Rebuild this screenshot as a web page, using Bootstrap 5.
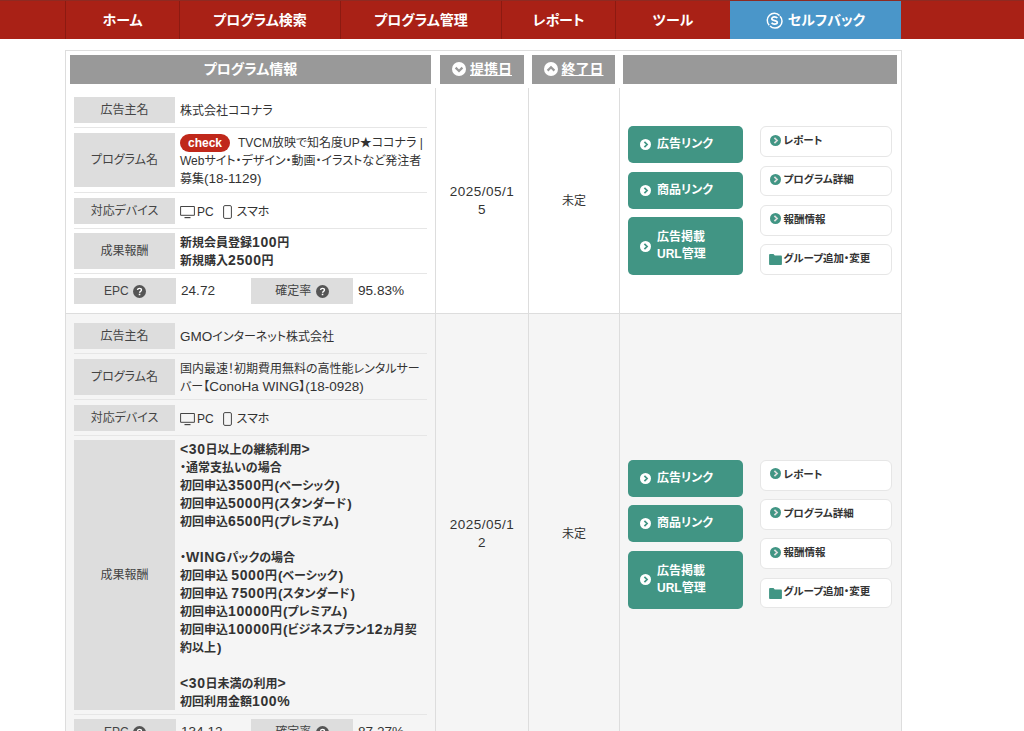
<!DOCTYPE html>
<html lang="ja">
<head>
<meta charset="utf-8">
<title>プログラム情報</title>
<link href="https://cdn.jsdelivr.net/npm/bootstrap@5.3.0/dist/css/bootstrap.min.css" rel="stylesheet">
<style>
html,body{height:731px;overflow:hidden;}
body{font-family:"Liberation Sans","Noto Sans CJK JP",sans-serif;font-size:12px;line-height:18px;color:#333;font-feature-settings:"palt";background:#fff;}
.topbar{height:39px;background:#a92116;border-top:1px solid #8e2a22;padding-left:65px;}
.topbar .nav-link{height:38px;color:#fff;font-weight:700;font-size:14px;line-height:38px;padding:0;text-align:center;border-left:1px solid #8c1a11;}
.tb-s{width:114px}.tb-t{width:115px}.tb-m{width:161px}.tb-b{width:171px;background:#4a96c9;border-left:0!important;}
.tb-b svg{width:17px;height:17px;vertical-align:-4px;margin-right:5px;}
.sheet{width:837px;margin:11px 0 0 65px;border:1px solid #ddd;border-bottom:0;}
.headrow{padding:4px;gap:8px;}
.headcell{height:29px;background:#999;color:#fff;font-weight:700;font-size:14px;line-height:29px;text-align:center;}
.headcell a{color:#fff;}
.headcell svg{width:14px;height:14px;vertical-align:-2px;margin-right:4px;}
.hc1{width:361px;margin-right:1px}.hc2{width:84px}.hc3{width:83px}.hc4{flex:1}
.rowgrid{display:grid;grid-template-columns:370px 93px 91px 1fr;border-bottom:1px solid #ddd;}
.rowgrid.shade{background:#f5f5f5;}
.infocol{padding:4px 8px 0;border-right:1px solid #ddd;}
.infoline{display:flex;padding:5px 0 4px;border-bottom:1px solid #e6e6e6;}
.infoline.threeline{padding-bottom:5px;}
.infoline.reward{padding:4px 0;}
.infoline.endline{border-bottom:0;padding:4px 0 9px;}
.lbl{width:101px;flex:none;background:#ddd;display:flex;align-items:center;justify-content:center;min-height:26px;color:#444;}
.val{padding:5px 4px 3px 5px;flex:1;min-width:0;}
.val.tight{padding:0 4px 0 5px;margin:1px 0 -1px;}
.lt{font-size:13.5px;line-height:1;}
.fw-bold .lt{font-size:14px;letter-spacing:.6px;}
.pa{font-size:13.5px;line-height:1;margin-left:1px;}
.lbl2{width:102px}
.num{font-size:13.6px;padding:4px 0 0 5px;width:75px;flex:none;line-height:18px;}
.num2{width:auto}
.qm{width:13px;height:13px;vertical-align:-2px;margin-left:1px;}
.devsvg{height:14px;vertical-align:-3px;margin-right:2px;}
.phone{margin-left:9px;margin-right:5px;}
.chip{background:#c0281b;font-size:12px;font-weight:700;padding:0;width:50px;height:18px;line-height:18px;margin-right:8px;}
.datecol{display:flex;align-items:center;justify-content:center;text-align:center;border-right:1px solid #ddd;padding:0 13px;font-size:13.5px;line-height:18px;word-break:break-all;letter-spacing:.5px;}
.endcol{display:flex;align-items:center;justify-content:center;border-right:1px solid #ddd;}
.actcol{display:flex;align-items:center;padding-left:8px;gap:17px;}
.btnstack1{width:115px;gap:8.5px;}
.btnstack2{width:132px;gap:8.5px;}
.gbtn{background:#419584;border:0;border-radius:5px;color:#fff;font-weight:700;font-size:12px;line-height:17px;min-height:37px;padding:0 0 0 12px;display:flex;align-items:center;text-align:left;gap:6px;}
.gbtn:hover{background:#419584;color:#fff;}
.gbtn svg{width:11px;height:11px;flex:none;}
.gbtn.tall{min-height:58px;}
.wbtn{background:#fff;border:1.5px solid #e6e6e6;border-radius:6px;color:#333;font-weight:700;font-size:10.5px;line-height:14px;height:30.75px;padding:0 0 3px 8.5px;display:flex;align-items:center;gap:3px;text-align:left;}
.wbtn:hover{background:#fff;color:#333;border-color:#e6e6e6;}
.wbtn svg{width:11px;height:11px;flex:none;}
.wbtn svg.foldic{width:13px;margin-left:-1px;margin-right:-1px;margin-top:4px;}
</style>
</head>
<body>
<svg width="0" height="0" class="d-block" aria-hidden="true">
<symbol id="cd" viewBox="0 0 14 14"><circle cx="7" cy="7" r="7" fill="#fff"/><path d="M3.6 5.6 7 9l3.4-3.4" fill="none" stroke="#999" stroke-width="2.2"/></symbol>
<symbol id="cu" viewBox="0 0 14 14"><circle cx="7" cy="7" r="7" fill="#fff"/><path d="M3.6 8.6 7 5.2l3.4 3.4" fill="none" stroke="#999" stroke-width="2.2"/></symbol>
<symbol id="cw" viewBox="0 0 14 14"><circle cx="7" cy="7" r="7" fill="#fff"/><path d="M5.6 3.6 9 7l-3.4 3.4" fill="none" stroke="#419584" stroke-width="2.2"/></symbol>
<symbol id="cg" viewBox="0 0 14 14"><circle cx="7" cy="7" r="7" fill="#419584"/><path d="M5.6 3.6 9 7l-3.4 3.4" fill="none" stroke="#ddd" stroke-width="2.2"/></symbol>
<symbol id="fold" viewBox="0 0 14 12"><path d="M0 1.2C0 .5.5 0 1.2 0h3.6l1.4 1.6h6.6c.7 0 1.2.5 1.2 1.2v8c0 .7-.5 1.2-1.2 1.2H1.2C.5 12 0 11.5 0 10.8z" fill="#419584"/></symbol>
<symbol id="pc" viewBox="0 0 15 14"><path d="M.6 1.5h13.800v8.800H.6z" fill="none" stroke="#444" stroke-width="1"/><path d="M4.500 12.600h6" stroke="#444" stroke-width="1.200"/></symbol>
<symbol id="ph" viewBox="0 0 9 14"><rect x=".6" y=".6" width="7.800" height="12.800" rx="1.300" fill="none" stroke="#444" stroke-width="1"/></symbol>
<symbol id="qq" viewBox="0 0 14 14"><circle cx="7" cy="7" r="7" fill="#555"/><path d="M4.900 5.400C5 4.200 5.900 3.600 7 3.600c1.200 0 2.100.7 2.100 1.800 0 1.500-2 1.500-2 3" fill="none" stroke="#fff" stroke-width="1.500"/><path d="M6.200 9.400h1.700V11H6.200z" fill="#fff"/></symbol>
</svg>

<ul class="nav flex-nowrap topbar">
  <li class="nav-item"><a class="nav-link tb-s" href="#">ホーム</a></li>
  <li class="nav-item"><a class="nav-link tb-m" href="#">プログラム検索</a></li>
  <li class="nav-item"><a class="nav-link tb-m" href="#">プログラム管理</a></li>
  <li class="nav-item"><a class="nav-link tb-s" href="#">レポート</a></li>
  <li class="nav-item"><a class="nav-link tb-t" href="#">ツール</a></li>
  <li class="nav-item"><a class="nav-link tb-b" href="#"><svg viewBox="0 0 17 17"><path d="M3.200 13.200A7 7 0 0 1 13.500 3.500M14 4.200a7 7 0 0 1-10 9.800" fill="none" stroke="#fff" stroke-width="1.500"/><path d="M11.300 6.200C10.800 5.300 9.700 4.900 8.500 4.900c-1.500 0-2.700.7-2.700 1.900 0 2.600 5.500 1 5.500 3.500 0 1.200-1.300 1.900-2.800 1.900-1.200 0-2.300-.5-2.900-1.400" fill="none" stroke="#fff" stroke-width="1.700"/></svg>セルフバック</a></li>
</ul>

<div class="sheet">
  <div class="d-flex headrow">
    <div class="headcell hc1">プログラム情報</div>
    <div class="headcell hc2"><svg><use href="#cd"/></svg><a href="#">提携日</a></div>
    <div class="headcell hc3"><svg><use href="#cu"/></svg><a href="#">終了日</a></div>
    <div class="headcell hc4"></div>
  </div>

  <div class="rowgrid">
    <div class="infocol">
      <div class="infoline"><div class="lbl">広告主名</div><div class="val">株式会社ココナラ</div></div>
      <div class="infoline threeline"><div class="lbl">プログラム名</div><div class="val tight"><span class="badge rounded-pill chip">check</span>TVCM放映で知名度UP★ココナラ | Webサイト・デザイン・動画・イラストなど発注者募集<span class="lt">(18-1129)</span></div></div>
      <div class="infoline"><div class="lbl">対応デバイス</div><div class="val"><svg class="devsvg" width="15" viewBox="0 0 15 14"><use href="#pc"/></svg>PC<svg class="devsvg phone" width="9" viewBox="0 0 9 14"><use href="#ph"/></svg>スマホ</div></div>
      <div class="infoline reward"><div class="lbl">成果報酬</div><div class="val tight fw-bold">新規会員登録<span class="lt">100</span>円<br>新規購入<span class="lt">2500</span>円</div></div>
      <div class="infoline endline"><div class="lbl lbl2">EPC&nbsp;<svg class="qm"><use href="#qq"/></svg></div><div class="num">24.72</div><div class="lbl lbl2">確定率&nbsp;<svg class="qm"><use href="#qq"/></svg></div><div class="num num2">95.83%</div></div>
    </div>
    <div class="datecol">2025/05/15</div>
    <div class="endcol">未定</div>
    <div class="actcol">
      <div class="d-flex flex-column btnstack1">
        <a class="btn gbtn" href="#"><svg><use href="#cw"/></svg>広告リンク</a>
        <a class="btn gbtn" href="#"><svg><use href="#cw"/></svg>商品リンク</a>
        <a class="btn gbtn tall" href="#"><svg><use href="#cw"/></svg><span>広告掲載<br>URL管理</span></a>
      </div>
      <div class="d-flex flex-column btnstack2">
        <a class="btn wbtn" href="#"><svg><use href="#cg"/></svg>レポート</a>
        <a class="btn wbtn" href="#"><svg><use href="#cg"/></svg>プログラム詳細</a>
        <a class="btn wbtn" href="#"><svg><use href="#cg"/></svg>報酬情報</a>
        <a class="btn wbtn" href="#"><svg class="foldic" viewBox="0 0 14 12"><use href="#fold"/></svg>グループ追加・変更</a>
      </div>
    </div>
  </div>

  <div class="rowgrid shade">
    <div class="infocol">
      <div class="infoline"><div class="lbl">広告主名</div><div class="val"><span class="lt">GMO</span>インターネット株式会社</div></div>
      <div class="infoline"><div class="lbl">プログラム名</div><div class="val tight">国内最速！初期費用無料の高性能レンタルサーバー【<span class="lt">ConoHa WING</span>】<span class="lt">(18-0928)</span></div></div>
      <div class="infoline"><div class="lbl">対応デバイス</div><div class="val"><svg class="devsvg" width="15" viewBox="0 0 15 14"><use href="#pc"/></svg>PC<svg class="devsvg phone" width="9" viewBox="0 0 9 14"><use href="#ph"/></svg>スマホ</div></div>
      <div class="infoline reward"><div class="lbl">成果報酬</div><div class="val tight fw-bold"><span class="lt">&lt;30</span>日以上の継続利用<span class="lt">&gt;</span><br>・通常支払いの場合<br>初回申込<span class="lt">3500</span>円<span class="pa">(</span>ベーシック<span class="pa">)</span><br>初回申込<span class="lt">5000</span>円<span class="pa">(</span>スタンダード<span class="pa">)</span><br>初回申込<span class="lt">6500</span>円<span class="pa">(</span>プレミアム<span class="pa">)</span><br><br>・<span class="lt">WING</span>パックの場合<br>初回申込 <span class="lt">5000</span>円<span class="pa">(</span>ベーシック<span class="pa">)</span><br>初回申込 <span class="lt">7500</span>円<span class="pa">(</span>スタンダード<span class="pa">)</span><br>初回申込<span class="lt">10000</span>円<span class="pa">(</span>プレミアム<span class="pa">)</span><br>初回申込<span class="lt">10000</span>円<span class="pa">(</span>ビジネスプラン<span class="lt">12</span>ヵ月契約以上<span class="pa">)</span><br><br><span class="lt">&lt;30</span>日未満の利用<span class="lt">&gt;</span><br>初回利用金額<span class="lt">100%</span></div></div>
      <div class="infoline endline"><div class="lbl lbl2">EPC&nbsp;<svg class="qm"><use href="#qq"/></svg></div><div class="num">134.12</div><div class="lbl lbl2">確定率&nbsp;<svg class="qm"><use href="#qq"/></svg></div><div class="num num2">87.27%</div></div>
    </div>
    <div class="datecol">2025/05/12</div>
    <div class="endcol">未定</div>
    <div class="actcol">
      <div class="d-flex flex-column btnstack1">
        <a class="btn gbtn" href="#"><svg><use href="#cw"/></svg>広告リンク</a>
        <a class="btn gbtn" href="#"><svg><use href="#cw"/></svg>商品リンク</a>
        <a class="btn gbtn tall" href="#"><svg><use href="#cw"/></svg><span>広告掲載<br>URL管理</span></a>
      </div>
      <div class="d-flex flex-column btnstack2">
        <a class="btn wbtn" href="#"><svg><use href="#cg"/></svg>レポート</a>
        <a class="btn wbtn" href="#"><svg><use href="#cg"/></svg>プログラム詳細</a>
        <a class="btn wbtn" href="#"><svg><use href="#cg"/></svg>報酬情報</a>
        <a class="btn wbtn" href="#"><svg class="foldic" viewBox="0 0 14 12"><use href="#fold"/></svg>グループ追加・変更</a>
      </div>
    </div>
  </div>
</div>
<script src="https://cdn.jsdelivr.net/npm/bootstrap@5.3.0/dist/js/bootstrap.bundle.min.js"></script>
</body>
</html>
